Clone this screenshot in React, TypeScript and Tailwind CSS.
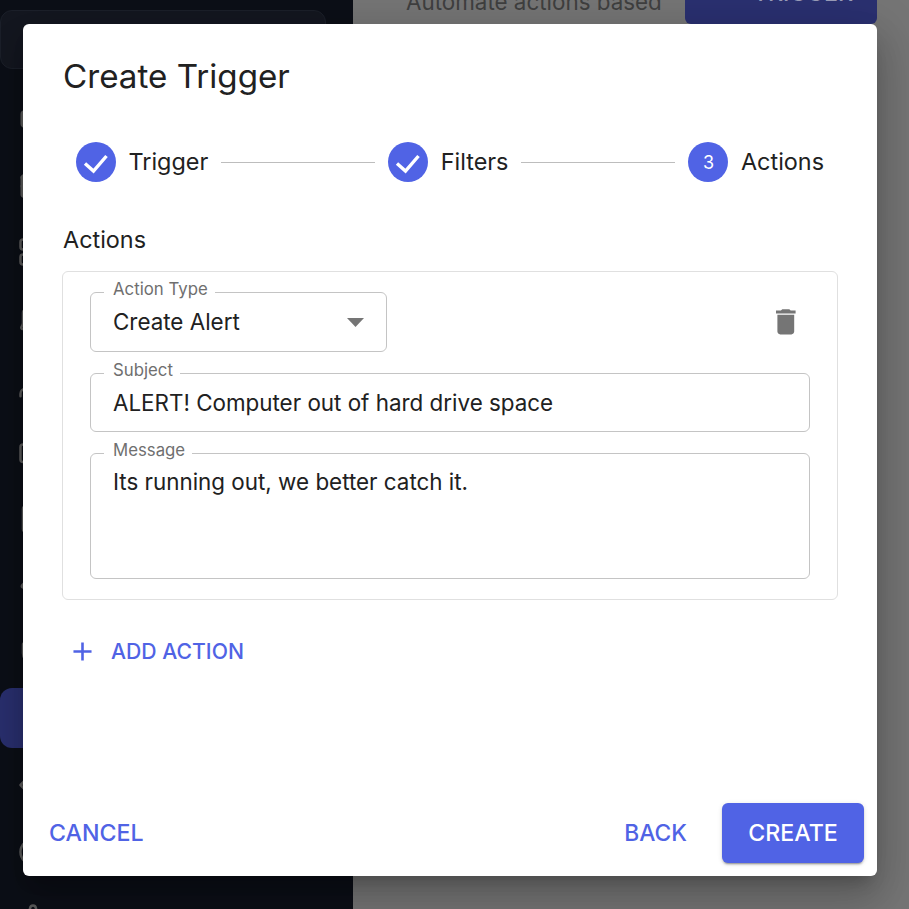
import { Box, Briefcase, Code, Database, FileText, Laptop, LifeBuoy, Server, Settings, Shield, Users, Zap } from "lucide-react";

const font = "font-['Inter',sans-serif]";

const navIcons = [Box, Database, Server, Laptop, Users, Briefcase, FileText, Zap, Shield, null, Code, LifeBuoy, Settings];

function Step({ done, num, label }: { done?: boolean; num?: number; label: string }) {
  return (
    <div className="flex items-center gap-[12.500px]">
      <div className="flex h-10 w-10 items-center justify-center rounded-full bg-[#5063e5] text-[18px] text-white">
        {done ? (
          <svg viewBox="0 0 40 40" className="h-10 w-10" fill="none" stroke="#fff" strokeWidth="3.400">
            <path d="M9 21.500l8.500 7.500L30.500 14" />
          </svg>
        ) : (
          num
        )}
      </div>
      <span className="text-[23.400px] leading-none text-[#212121]">{label}</span>
    </div>
  );
}

function Outlined({ label, className, children }: { label: string; className: string; children: React.ReactNode }) {
  return (
    <div className={`relative rounded-[6px] border border-[#c4c4c4] px-[22px] ${className}`}>
      <span className="absolute -top-[14px] left-[13px] bg-white pr-[7px] pl-[9px] text-[16.800px] leading-5 text-[#6f6f6f]">{label}</span>
      {children}
    </div>
  );
}

export default function App() {
  return (
    <div className={`relative flex h-[909px] w-[909px] overflow-hidden ${font}`}>
      <div className="w-[353px] bg-[#0c0f17] pt-[10px]">
        <div className="h-[59px] w-[326px] rounded-xl border border-[#1c202a] bg-[#141720]" />
        <div className="mt-[20px] flex flex-col gap-[6.600px]">
          {navIcons.map((Icon, i) => (
            <div key={i} className={`flex h-[60px] w-[326px] shrink-0 items-center rounded-xl pl-[18px] text-[#5c5c5c] ${i === 9 ? "bg-[#2a3070]" : ""}`}>
              {Icon && <Icon className="h-[30px] w-[30px]" />}
            </div>
          ))}
        </div>
      </div>
      <div className="flex flex-1 items-start bg-[#757575] pl-[53px]">
        <span className="-mt-[12px] text-[22.400px] leading-7 whitespace-nowrap text-[#3f3f3f]">Automate actions based</span>
      </div>
      <div className="absolute top-0 left-[685px] flex h-[24px] w-[192px] items-end justify-center overflow-hidden rounded-b-md bg-[#2a3070]">
        <span className="mb-[17px] ml-[44px] text-[23.200px] leading-7 font-medium text-[#9a9db8]">TRIGGER</span>
      </div>
      <div className="absolute top-[24px] left-[23px] flex h-[852px] w-[854px] flex-col rounded-md bg-white shadow-[0_11px_15px_-7px_rgba(0,0,0,0.2),0_24px_38px_3px_rgba(0,0,0,0.14),0_9px_46px_8px_rgba(0,0,0,0.12)]">
        <h2 className="px-10 pt-[32px] text-[33.200px] leading-10 font-normal text-[#212121]">Create Trigger</h2>
        <div className="mt-[46px] flex items-center px-[53px]">
          <Step done label="Trigger" />
          <div className="mx-[13px] h-px flex-1 bg-[#bdbdbd]" />
          <Step done label="Filters" />
          <div className="mx-[13px] h-px flex-1 bg-[#bdbdbd]" />
          <Step num={3} label="Actions" />
        </div>
        <div className="mt-[44px] px-10 text-[23.400px] leading-7 text-[#212121]">Actions</div>
        <div className="mx-[39px] mt-[17px] flex h-[329px] flex-col gap-[21px] rounded-md border border-[#e0e0e0] px-[27px] pt-[20px]">
          <div className="flex items-center justify-between">
            <Outlined label="Action Type" className="flex h-[60px] w-[297px] items-center justify-between">
              <span className="text-[22.400px] text-[#212121]">Create Alert</span>
              <svg width="17" height="9" viewBox="0 0 17 9"><path d="M0 0h17L8.500 9z" fill="#757575" /></svg>
            </Outlined>
            <svg viewBox="0 0 24 24" className="mr-[7px] h-[33.600px] w-[33.600px]" fill="#757575">
              <path d="M6 19c0 1.100.9 2 2 2h8c1.100 0 2-.9 2-2V7H6v12zM19 4h-3.500l-1-1h-5l-1 1H5v2h14V4z" />
            </svg>
          </div>
          <Outlined label="Subject" className="flex h-[59px] items-center">
            <span className="text-[22.400px] text-[#212121]">ALERT! Computer out of hard drive space</span>
          </Outlined>
          <Outlined label="Message" className="h-[126px] pt-[12px]">
            <span className="text-[22.400px] leading-8 text-[#212121]">Its running out, we better catch it.</span>
          </Outlined>
        </div>
        <button className="mt-[36px] ml-[44px] flex w-fit items-center gap-[13px] text-[21.200px] leading-7 font-medium text-[#5063e5]">
          <svg viewBox="0 0 24 24" className="h-[31px] w-[31px]" fill="#5063e5">
            <path d="M19 13h-6v6h-2v-6H5v-2h6V5h2v6h6v2z" />
          </svg>
          <span className="-mt-[2px]">ADD ACTION</span>
        </button>
        <div className="mt-auto flex items-center justify-between pr-[13px] pb-[13px] pl-[26px]">
          <button className="text-[23.200px] font-medium text-[#5063e5]">CANCEL</button>
          <div className="flex items-center gap-[35px]">
            <button className="text-[22.800px] font-medium text-[#5063e5]">BACK</button>
            <button className="h-[60px] w-[142px] rounded-md bg-[#5063e5] text-[23.200px] font-medium text-white shadow-[0_3px_1px_-2px_rgba(0,0,0,0.2),0_2px_2px_0_rgba(0,0,0,0.14),0_1px_5px_0_rgba(0,0,0,0.12)]">CREATE</button>
          </div>
        </div>
      </div>
    </div>
  );
}
